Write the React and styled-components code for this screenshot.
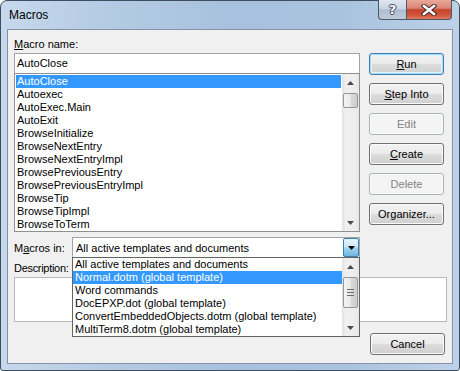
import styled, { createGlobalStyle } from "styled-components";

const GlobalStyle = createGlobalStyle`
  html, body { margin: 0; padding: 0; background: #ffffff; }
  body {
    font-family: "Liberation Sans", Arial, sans-serif;
    font-size: 11px;
    color: #000;
  }
  * { box-sizing: border-box; }
`;

const macros = [
  "AutoClose",
  "Autoexec",
  "AutoExec.Main",
  "AutoExit",
  "BrowseInitialize",
  "BrowseNextEntry",
  "BrowseNextEntryImpl",
  "BrowsePreviousEntry",
  "BrowsePreviousEntryImpl",
  "BrowseTip",
  "BrowseTipImpl",
  "BrowseToTerm",
];

const sources = [
  "All active templates and documents",
  "Normal.dotm (global template)",
  "Word commands",
  "DocEPXP.dot (global template)",
  "ConvertEmbeddedObjects.dotm (global template)",
  "MultiTerm8.dotm (global template)",
];

function Arrow({ down }) {
  return (
    <svg width="7" height="4" viewBox="0 0 7 4">
      <path d={down ? "M0 0 L7 0 L3.5 4 Z" : "M0 4 L7 4 L3.5 0 Z"} fill="#4a4a4a" />
    </svg>
  );
}

function ScrollBar({ offset, size, grip }) {
  return (
    <Track>
      <ArrowBox>
        <Arrow />
      </ArrowBox>
      <Thumb $offset={offset} $size={size}>
        {grip && (
          <svg width="7" height="7" viewBox="0 0 7 7">
            <path d="M0 0.5 H7 M0 3.5 H7 M0 6.5 H7" stroke="#6e6e6e" strokeWidth="1" />
          </svg>
        )}
      </Thumb>
      <Spacer />
      <ArrowBox>
        <Arrow down />
      </ArrowBox>
    </Track>
  );
}

function Key({ text }) {
  return (
    <>
      <u>{text[0]}</u>
      {text.slice(1)}
    </>
  );
}

export default function App() {
  return (
    <>
      <GlobalStyle />
      <Window>
        <TitleBar>
          <Title>Macros</Title>
          <Captions>
            <HelpButton>?</HelpButton>
            <CloseButton>
              <svg width="16" height="12" viewBox="0 0 16 12">
                <path d="M3 2 L13 10 M13 2 L3 10" stroke="#3a2420" strokeWidth="4.4" strokeLinecap="square" />
                <path d="M3 2 L13 10 M13 2 L3 10" stroke="#ffffff" strokeWidth="2.6" strokeLinecap="square" />
              </svg>
            </CloseButton>
          </Captions>
        </TitleBar>

        <Client>
          <TopRow>
            <LeftCol>
              <Label>
                <u>M</u>acro name:
              </Label>
              <TextBox>AutoClose</TextBox>
              <ListBox>
                <Rows>
                  {macros.map((m, i) => (
                    <Row key={m} $selected={i === 0}>
                      {m}
                    </Row>
                  ))}
                </Rows>
                <ScrollBar offset={2} size={15} />
              </ListBox>
            </LeftCol>

            <ButtonCol>
              <Button $default>
                <Key text="Run" />
              </Button>
              <Button>
                <Key text="Step Into" />
              </Button>
              <Button disabled>Edit</Button>
              <Button>
                <Key text="Create" />
              </Button>
              <Button disabled>Delete</Button>
              <Button>Organizer...</Button>
            </ButtonCol>
          </TopRow>

          <MacrosInRow>
            <InlineLabel>
              M<u>a</u>cros in:
            </InlineLabel>
            <Combo>
              <ComboText>All active templates and documents</ComboText>
              <DropButton>
                <svg width="7" height="4" viewBox="0 0 7 4">
                  <path d="M0 0 L7 0 L3.5 4 Z" fill="#000" />
                </svg>
              </DropButton>
              <Popup>
                <Rows $flush>
                  {sources.map((s, i) => (
                    <Row key={s} $selected={i === 1} $wide>
                      {s}
                    </Row>
                  ))}
                </Rows>
                <ScrollBar offset={2} size={31} grip />
              </Popup>
            </Combo>
          </MacrosInRow>

          <DescLabel>Description:</DescLabel>
          <DescBox />

          <Footer>
            <Button>Cancel</Button>
          </Footer>
        </Client>
      </Window>
    </>
  );
}

const Window = styled.div`
  width: 460px;
  height: 371px;
  display: flex;
  flex-direction: column;
  padding: 0 6px 6px 6px;
  border: 1px solid #3f4d5e;
  border-radius: 7px 7px 3px 3px;
  background: linear-gradient(
    to right,
    #c6d8ec 0%,
    #b3cae3 25%,
    #a7c1de 50%,
    #a9c3df 75%,
    #bed2e8 100%
  );
`;

const TitleBar = styled.div`
  height: 28px;
  display: flex;
  justify-content: space-between;
  align-items: flex-start;
  margin: 0 -6px;
`;

const Title = styled.div`
  padding-left: 8px;
  line-height: 28px;
  font-size: 12px;
  color: #000;
`;

const Captions = styled.div`
  display: flex;
  margin-top: -1px;
  margin-right: 7px;
  height: 20px;
`;

const CaptionBase = styled.div`
  height: 20px;
  display: flex;
  align-items: center;
  justify-content: center;
  border: 1px solid #4b5869;
  border-top: none;
`;

const HelpButton = styled(CaptionBase)`
  width: 28px;
  border-right: none;
  border-radius: 0 0 0 4px;
  background: linear-gradient(#dfe7f1 0%, #c9d6e5 45%, #aebdcf 52%, #bfcbd9 100%);
  font-family: "DejaVu Sans", sans-serif;
  font-weight: bold;
  font-size: 13px;
  color: #fff;
  text-shadow: 0 0 1px #2c3440, 1px 0 0 #4a5565, -1px 0 0 #4a5565, 0 1px 0 #4a5565, 0 -1px 0 #4a5565;
`;

const CloseButton = styled(CaptionBase)`
  width: 46px;
  border-radius: 0 0 4px 0;
  background: linear-gradient(#e9a898 0%, #d98676 42%, #c4432b 52%, #d0563c 80%, #e07b5f 100%);
`;

const Client = styled.div`
  display: flex;
  flex-direction: column;
  background: #f0f0f0;
  border: 1px solid #8493a6;
  padding: 7px 7px 8px 6px;
`;

const TopRow = styled.div`
  display: flex;
`;

const LeftCol = styled.div`
  width: 346px;
  display: flex;
  flex-direction: column;
`;

const Label = styled.div`
  height: 15px;
  line-height: 15px;
  margin-bottom: 1px;
`;

const TextBox = styled.div`
  height: 20px;
  line-height: 18px;
  padding-left: 2px;
  background: #fff;
  border: 1px solid #a4a4a4;
  border-bottom: none;
`;

const ListBox = styled.div`
  height: 159px;
  display: flex;
  background: #fff;
  border: 1px solid #8e8f8f;
`;

const Rows = styled.div`
  flex: 1;
  padding: ${(p) => (p.$flush ? "0" : "1px 1px 1px 1px")};
  overflow: hidden;
`;

const Row = styled.div`
  height: 13px;
  line-height: 13px;
  padding-left: ${(p) => (p.$wide ? "2px" : "1px")};
  white-space: nowrap;
  background: ${(p) => (p.$selected ? "#3399ff" : "transparent")};
  color: ${(p) => (p.$selected ? "#fff" : "#000")};
`;

const Track = styled.div`
  width: 17px;
  display: flex;
  flex-direction: column;
  align-items: center;
  background: linear-gradient(to right, #e3e3e3 0%, #f0f0f0 25%, #ededed 75%, #e6e6e6 100%);
`;

const ArrowBox = styled.div`
  width: 17px;
  height: 17px;
  display: flex;
  align-items: center;
  justify-content: center;
`;

const Thumb = styled.div`
  width: 15px;
  height: ${(p) => p.$size}px;
  margin-top: ${(p) => p.$offset}px;
  display: flex;
  align-items: center;
  justify-content: center;
  border: 1px solid #979797;
  border-radius: 2px;
  background: linear-gradient(to right, #f4f4f4 0%, #e8e8e8 50%, #d8d8d8 51%, #cfcfcf 100%);
`;

const Spacer = styled.div`
  flex: 1;
`;

const ButtonCol = styled.div`
  width: 75px;
  margin-left: 9px;
  padding-top: 16px;
  display: flex;
  flex-direction: column;
  gap: 8px;
`;

const Button = styled.div`
  width: 75px;
  height: 22px;
  display: flex;
  align-items: center;
  justify-content: center;
  border-radius: 3px;
  border: 1px solid ${(p) => (p.disabled ? "#adb2b5" : p.$default ? "#3c7fb1" : "#707070")};
  color: ${(p) => (p.disabled ? "#838383" : "#000")};
  background: ${(p) =>
    p.disabled
      ? "#f4f4f4"
      : "linear-gradient(#f2f2f2 0%, #ebebeb 50%, #dddddd 51%, #cfcfcf 100%)"};
  box-shadow: ${(p) =>
    p.$default ? "inset 0 0 0 1px #a8dcf6, inset 0 0 0 2px #e2f3fc" : "inset 0 0 0 1px #fbfbfb"};
`;

const MacrosInRow = styled.div`
  display: flex;
  align-items: center;
  margin-top: 5px;
  height: 21px;
`;

const InlineLabel = styled.div`
  width: 58px;
`;

const Combo = styled.div`
  position: relative;
  width: 288px;
  height: 21px;
  display: flex;
  align-items: center;
  background: #fff;
  border: 1px solid #a4a4a4;
`;

const ComboText = styled.div`
  flex: 1;
  padding-left: 3px;
  white-space: nowrap;
`;

const DropButton = styled.div`
  width: 16px;
  height: 19px;
  display: flex;
  align-items: center;
  justify-content: center;
  border: 1px solid #3c7fb1;
  border-radius: 2px;
  background: linear-gradient(#e6f5fd 0%, #cde9f8 45%, #9fd4f1 52%, #6cb6de 100%);
`;

const Popup = styled.div`
  position: absolute;
  top: 19px;
  left: -1px;
  width: 288px;
  height: 80px;
  display: flex;
  background: #fff;
  border: 1px solid #646464;
  z-index: 2;
`;

const DescLabel = styled.div`
  margin-top: 3px;
  height: 15px;
  line-height: 15px;
  letter-spacing: -0.3px;
`;

const DescBox = styled.div`
  width: 433px;
  height: 45px;
  margin-top: 1px;
  background: #fff;
  border: 1px solid #b9b9b9;
`;

const Footer = styled.div`
  display: flex;
  justify-content: flex-end;
  margin-top: 11px;
`;
